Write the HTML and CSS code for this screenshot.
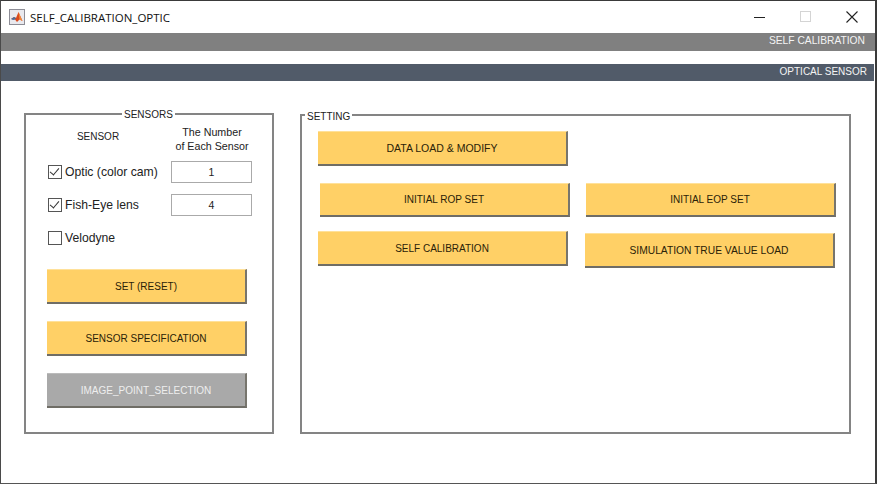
FILE: index.html
```html
<!DOCTYPE html>
<html lang="en">
<head>
  <meta charset="UTF-8">
  <title>SELF_CALIBRATION_OPTIC</title>
  <link rel="stylesheet" href="styles.css">
</head>
<body>
  <div class="window">
    <!-- Title bar -->
    <div class="titlebar">
      <svg class="app-icon" width="16" height="16" viewBox="0 0 16 16">
        <rect x="0.5" y="0.5" width="15" height="15" fill="#e9e9ee" stroke="#8d8d96"/>
        <path d="M2 10 L5 8 L7 9 L9.5 3 L13.5 12 L10.5 10.5 L8 13 L6 10.5 Z" fill="#d9481c"/>
        <path d="M2 10 L5 8 L7 9 L6 10.5 L4 11 Z" fill="#4b6d9c"/>
        <path d="M9.5 3 L13.5 12 L10.5 10.5 Z" fill="#f08a3c"/>
      </svg>
      <span class="app-title">SELF_CALIBRATION_OPTIC</span>
      <div class="win-controls">
        <svg width="12" height="12" viewBox="0 0 12 12"><path d="M0 6.5 H11" stroke="#222"/></svg>
        <svg width="12" height="12" viewBox="0 0 12 12"><rect x="0.5" y="0.5" width="10" height="10" fill="none" stroke="#d4d4d4"/></svg>
        <svg width="12" height="12" viewBox="0 0 12 12"><path d="M0.5 0.5 L11.5 11.5 M11.5 0.5 L0.5 11.5" stroke="#222" stroke-width="1.1"/></svg>
      </div>
    </div>

    <div class="band band-gray">SELF CALIBRATION</div>
    <div class="band band-dark">OPTICAL SENSOR</div>

    <div class="content">
      <!-- Sensors -->
      <fieldset class="panel panel-sensors">
        <legend class="legend-center">SENSORS</legend>
        <div class="sensor-head">
          <div class="head-name">SENSOR</div>
          <div class="head-count">The Number<br>of Each Sensor</div>
        </div>
        <div class="sensor-row">
          <label class="check"><span class="box on"></span>Optic (color cam)</label>
          <div class="count-box">1</div>
        </div>
        <div class="sensor-row">
          <label class="check"><span class="box on"></span>Fish-Eye lens</label>
          <div class="count-box">4</div>
        </div>
        <div class="sensor-row">
          <label class="check"><span class="box"></span>Velodyne</label>
        </div>
        <div class="sensor-buttons">
          <button class="btn">SET (RESET)</button>
          <button class="btn">SENSOR SPECIFICATION</button>
          <button class="btn btn-off">IMAGE_POINT_SELECTION</button>
        </div>
      </fieldset>

      <!-- Setting -->
      <fieldset class="panel panel-setting">
        <legend class="legend-left">SETTING</legend>
        <div class="setting-grid">
          <div class="setting-col">
            <button class="btn btn-data">DATA LOAD &amp; MODIFY</button>
            <button class="btn btn-rop">INITIAL ROP SET</button>
            <button class="btn btn-self">SELF CALIBRATION</button>
          </div>
          <div class="setting-col col-right">
            <button class="btn btn-eop">INITIAL EOP SET</button>
            <button class="btn btn-sim">SIMULATION TRUE VALUE LOAD</button>
          </div>
        </div>
      </fieldset>
    </div>
  </div>
</body>
</html>
```

FILE: styles.css
```css
html, body {
  margin: 0;
  padding: 0;
}

body {
  background: #fff;
  font-family: "Liberation Sans", Arial, sans-serif;
  color: #222;
}

.window {
  box-sizing: border-box;
  width: 877px;
  height: 484px;
  border-top: 1px solid #3a3a3a;
  border-left: 1px solid #4a4a4a;
  border-right: 2px solid #3a3a3a;
  border-bottom: 1px solid #555;
  background: #fff;
  overflow: hidden;
}

/* Title bar */
.titlebar {
  display: flex;
  align-items: center;
  height: 32px;
  padding-left: 8px;
}

.app-icon {
  flex: none;
  margin-right: 5px;
}

.app-title {
  font-family: "Open Sans", sans-serif;
  font-size: 11.5px;
  color: #111;
}

.win-controls {
  display: flex;
  gap: 34px;
  margin-left: auto;
  margin-right: 17px;
}

/* Bands */
.band {
  color: #f4f4f4;
  text-align: right;
}

.band-gray {
  height: 18px;
  line-height: 15px;
  background: #808080;
  font-size: 10.25px;
  padding-right: 10px;
}

.band-dark {
  height: 17px;
  line-height: 15px;
  margin-top: 13px;
  margin-right: 1px;
  background: #515b69;
  font-size: 10px;
  padding-right: 7px;
}

/* Panels */
.content {
  display: flex;
  align-items: flex-end;
  gap: 26px;
  height: 353px;
  padding-left: 23px;
}

.panel {
  box-sizing: border-box;
  margin: 0;
  padding: 0;
  min-width: 0;
  border: 2px solid #848484;
  font-size: 10px;
}

.panel legend {
  padding: 0 2px;
  font-size: 10px;
  line-height: 12px;
  color: #222;
}

.panel .legend-center {
  margin-left: 96px;
  padding-top: 2px;
}

.panel .legend-left {
  margin-left: 3px;
  padding-top: 4px;
}

.panel-sensors {
  width: 250px;
  height: 327px;
}

.panel-setting {
  width: 551px;
  height: 327px;
}

/* Sensors */
.sensor-head {
  display: flex;
  height: 40px;
  padding-left: 22px;
}

.head-name {
  width: 100px;
  margin-top: 10px;
  text-align: center;
  font-size: 10px;
  line-height: 12px;
}

.head-count {
  width: 88px;
  margin: 4px 0 0 20px;
  text-align: center;
  font-size: 10.7px;
  line-height: 14px;
  white-space: nowrap;
}

.sensor-row {
  display: flex;
  align-items: center;
  justify-content: space-between;
  width: 204px;
  height: 22px;
  margin: 0 0 11px 22px;
}

.check {
  display: flex;
  align-items: center;
  font-size: 12.2px;
  color: #222;
}

.box {
  box-sizing: border-box;
  position: relative;
  width: 14px;
  height: 14px;
  margin: 0 3px 0 0;
  border: 1px solid #555;
  background: #fff;
}

.box.on::after {
  content: "";
  position: absolute;
  left: 3px;
  top: 0;
  width: 4px;
  height: 8px;
  border-right: 1.4px solid #333;
  border-bottom: 1.4px solid #333;
  transform: rotate(40deg);
}

.count-box {
  box-sizing: border-box;
  width: 81px;
  height: 22px;
  border: 1px solid #aaa;
  background: #fff;
  text-align: center;
  font-size: 10.5px;
  line-height: 20px;
}

.sensor-buttons {
  display: flex;
  flex-direction: column;
  gap: 17px;
  margin: 20px 0 0 21px;
}

/* Buttons */
.btn {
  box-sizing: border-box;
  display: block;
  width: 200px;
  height: 35px;
  padding: 0;
  border: 0;
  border-top: 1px solid #ffe19a;
  border-right: 2px solid #77756d;
  border-bottom: 2px solid #6f6d66;
  background: #ffd066;
  font-family: "Liberation Sans", Arial, sans-serif;
  font-size: 10px;
  color: #2a2208;
}

.btn-off {
  background: #a9a9a9;
  border-top-color: #bbb;
  color: #eee;
}

/* Setting */
.setting-grid {
  display: flex;
  align-items: flex-start;
  gap: 15px;
  padding: 8px 0 0 16px;
}

.setting-col .btn {
  width: 250px;
}

.setting-col .btn-data {
  font-size: 10.5px;
}

.btn-rop {
  margin: 17px 0 0 2px;
  height: 34px;
}

.btn-self {
  margin-top: 14px;
}

.setting-col .btn-eop {
  margin: 52px 0 0 1px;
  height: 34px;
}

.setting-col .btn-sim {
  margin-top: 16px;
  font-size: 10.25px;
}
```
